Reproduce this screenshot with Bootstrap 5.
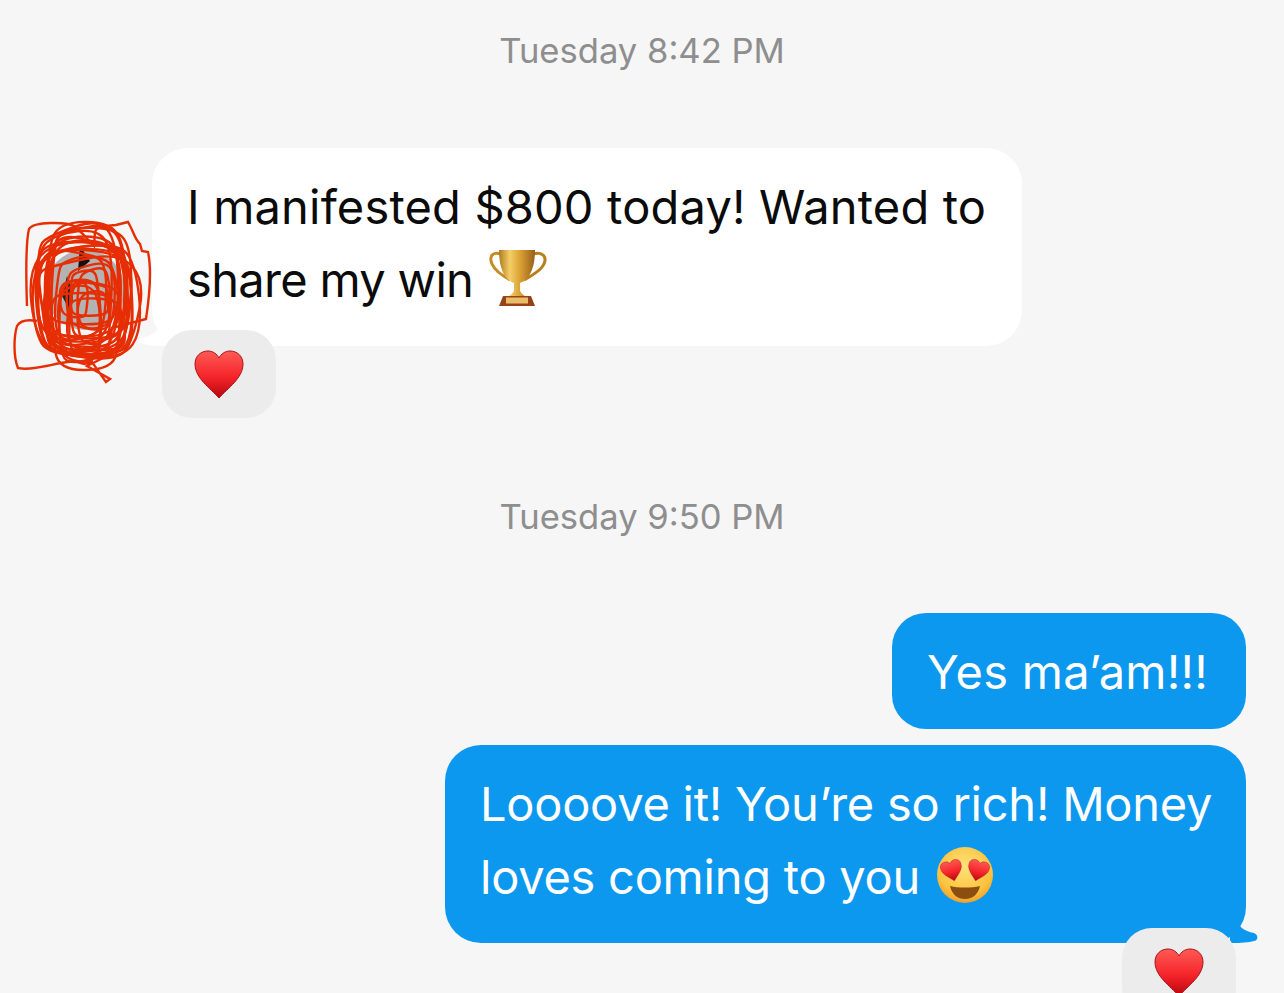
<!DOCTYPE html>
<html lang="en">
<head>
<meta charset="UTF-8">
<meta name="viewport" content="width=device-width, initial-scale=1.0">
<title>Messages</title>
<link href="https://cdn.jsdelivr.net/npm/bootstrap@5.3.0/dist/css/bootstrap.min.css" rel="stylesheet">
<style>
    html, body { height: 993px; overflow: hidden; }
    body { background: #f6f6f6; font-family: Inter, "Liberation Sans", sans-serif; }
    .chat-wrap { padding: 0 38px 0 152px; }
    .stamp { font-size: 34.6px; line-height: 40px; color: #8e8e8e; text-align: center; margin-left: -152px; margin-right: -38px; }
    .stamp-first { padding-top: 30px; }
    .stamp-second { margin-top: 150px; }
    .incoming-row { margin-top: 78px; position: relative; }
    .bubble { position: relative; font-size: 47px; line-height: 73px; letter-spacing: -.25px; padding: 22px 35px 30px; border-radius: 36px; white-space: nowrap; }
    .bubble-in { background: #fff; color: #0b0b0b; width: 870px; }
    .bubble-out { background: #0c98ee; color: #fff; }
    .bubble-short { width: 354px; border-radius: 34px; padding: 22px 35px 21px; margin-top: 77px; height: 116px; letter-spacing: .25px; }
    .bubble-long { width: 801px; margin-top: 16px; height: 198px; }
    .line-wide { letter-spacing: .18px; }
    .line-tight { letter-spacing: -.67px; }
    .tail { position: absolute; bottom: 0; }
    .tail-in { left: -14px; }
    .tail-out { right: -14px; }
    .react { position: absolute; width: 114px; height: 88px; background: #ececec; border-radius: 30px; display: flex; justify-content: center; padding-top: 20px; }
    .react-in { left: 10px; top: 182px; }
    .react-out { right: 10px; bottom: -75px; height: 90px; }
    .scribble { position: absolute; left: -140px; top: 68px; }
    .inline-emoji { vertical-align: -10px; margin-left: 3px; }
</style>
</head>
<body>
<svg width="0" height="0" class="position-absolute">
    <defs>
        <linearGradient id="heartFill" x1="0" y1="0" x2="0" y2="1">
            <stop offset="0" stop-color="#ff5a55"/>
            <stop offset="0.55" stop-color="#f5252a"/>
            <stop offset="1" stop-color="#b8050f"/>
        </linearGradient>
        <linearGradient id="cupFill" x1="0" y1="0" x2="1" y2="0">
            <stop offset="0" stop-color="#b07a1e"/>
            <stop offset="0.3" stop-color="#f3cf68"/>
            <stop offset="0.6" stop-color="#d99f32"/>
            <stop offset="1" stop-color="#94601a"/>
        </linearGradient>
        <radialGradient id="faceFill" cx="0.5" cy="0.35" r="0.7">
            <stop offset="0" stop-color="#ffe27a"/>
            <stop offset="0.7" stop-color="#fbc23e"/>
            <stop offset="1" stop-color="#e9962a"/>
        </radialGradient>
        <symbol id="heart" viewBox="0 0 50 50">
            <path d="M25 48 C16 38 1 28 1 14 C1 6 7 1 14 1 C19 1 23 4 25 8 C27 4 31 1 36 1 C43 1 49 6 49 14 C49 28 34 38 25 48 Z" fill="url(#heartFill)" stroke="#a9121a" stroke-width="1"/>
        </symbol>
    </defs>
</svg>

<div class="chat-wrap position-relative">
    <div class="stamp stamp-first">Tuesday 8:42 PM</div>

    <div class="incoming-row">
        <div class="bubble bubble-in">
            <span class="line-wide">I manifested $800 today! Wanted to</span><br><span class="line-tight">share my win</span>
            <svg class="inline-emoji" width="60" height="60" viewBox="0 0 60 60">
                <path d="M12 7 C3 4 0 10 3 17 C6 24 14 29 21 33" fill="none" stroke="#c58c24" stroke-width="3"/>
                <path d="M44 7 C54 4 58 10 55 17 C52 24 42 29 35 33" fill="none" stroke="#b87e1c" stroke-width="3"/>
                <path d="M10 3 H46 C46 20 41 33 31 36 V43 C31 46 35 48 37 50 H19 C21 48 25 46 25 43 V36 C15 33 10 20 10 3 Z" fill="url(#cupFill)"/>
                <path d="M14 49 H42 L46 59 H10 Z" fill="#96421b"/>
                <rect x="17" y="50.5" width="22" height="6" fill="#e9bd6a"/>
            </svg>
            <svg class="tail tail-in" width="30" height="24" viewBox="0 0 30 24">
                <path d="M22 0 C22 8 16 14 2 16 C-1 18 0 22 6 22 C14 24 24 24 30 24 V0 Z" fill="#fff"/>
            </svg>
        </div>
        <div class="react react-in"><svg width="50" height="50"><use href="#heart"/></svg></div>

        <svg class="scribble" width="145" height="170" viewBox="0 0 145 170">
            <circle cx="73" cy="74" r="40" fill="#b3b3b3"/>
            <path d="M55 60 C62 75 62 85 58 95 L50 80 Z" fill="#222"/>
            <path d="M68 30 L78 45 L66 55 Z" fill="#111"/>
            <g id="scribbleLines" fill="none" stroke="#e62e05" stroke-width="2.4">
                <path d="M15 90 C14 60 14 25 17 13 C22 5 55 6 62 10 C70 16 76 24 82 30 L83 16 C85 10 92 10 104 9 L116 6 C122 16 122 22 128 28 L130 35 L136 36 C139 50 139 70 134 103 L100 112 L95 140 L75 150 L98 163 L94 166 L80 146 L72 148 L62 145 L55 146 C40 148 20 155 6 152 C1 140 2 120 5 110 C8 105 14 103 25 105"/>
            </g>
        </svg>
    </div>

    <div class="stamp stamp-second">Tuesday 9:50 PM</div>

    <div class="d-flex flex-column align-items-end">
        <div class="bubble bubble-out bubble-short">Yes ma’am!!!</div>
        <div class="bubble bubble-out bubble-long">
            Loooove it! You’re so rich! Money<br>loves coming to you
            <svg class="inline-emoji" width="58" height="58" viewBox="0 0 58 58">
                <circle cx="29" cy="29" r="28" fill="url(#faceFill)"/>
                <path d="M14 40 C22 42 36 42 44 40 C42 49 36 53 29 53 C22 53 16 49 14 40 Z" fill="#8b4e10"/>
                <use href="#heart" x="5" y="14" width="22" height="22" transform="rotate(-14 16 25)"/>
                <use href="#heart" x="31" y="14" width="22" height="22" transform="rotate(14 42 25)"/>
            </svg>
            <svg class="tail tail-out" width="30" height="24" viewBox="0 0 30 24">
                <path d="M8 0 C8 8 14 12 24 14 C29 16 28 22 24 22 C16 24 6 24 0 24 V0 Z" fill="#0c98ee"/>
            </svg>
            <div class="react react-out"><svg width="50" height="50"><use href="#heart"/></svg></div>
        </div>
    </div>
</div>

<script>
    // pen scribble over the avatar: wobbly closed loops around its centre
    const lines = document.getElementById('scribbleLines');
    let seed = 11;
    function rnd() {
        seed = (seed * 16807) % 2147483647;
        return seed / 2147483647;
    }
    const mid = (p, q) => ((p[0] + q[0]) / 2).toFixed(1) + ' ' + ((p[1] + q[1]) / 2).toFixed(1);
    function addLoop(cx, cy, rx, ry) {
        const pts = [];
        for (let a = 0; a < 8; a++) {
            // square the loop off a bit, the pen strokes are boxy
            const t = (a + 0.5) / 8 * Math.PI * 2;
            const sx = Math.sign(Math.cos(t)) * Math.pow(Math.abs(Math.cos(t)), 0.55);
            const sy = Math.sign(Math.sin(t)) * Math.pow(Math.abs(Math.sin(t)), 0.55);
            pts.push([cx + sx * rx * (0.85 + rnd() * 0.3), cy + sy * ry * (0.85 + rnd() * 0.3)]);
        }
        let d = 'M' + mid(pts[7], pts[0]);
        pts.forEach((p, k) => {
            d += ' Q' + p[0].toFixed(1) + ' ' + p[1].toFixed(1) + ' ' + mid(p, pts[(k + 1) % 8]);
        });
        const path = document.createElementNS('http://www.w3.org/2000/svg', 'path');
        path.setAttribute('d', d + 'Z');
        lines.appendChild(path);
    }
    for (let i = 0; i < 16; i++) {
        addLoop(71 + (rnd() - 0.5) * 14, 80 + (rnd() - 0.5) * 22, 38 + rnd() * 18, 44 + rnd() * 24);
    }
    for (let i = 0; i < 12; i++) {
        addLoop(72 + (rnd() - 0.5) * 24, 96 + (rnd() - 0.5) * 36, 14 + rnd() * 26, 16 + rnd() * 30);
    }
</script>
</body>
</html>
